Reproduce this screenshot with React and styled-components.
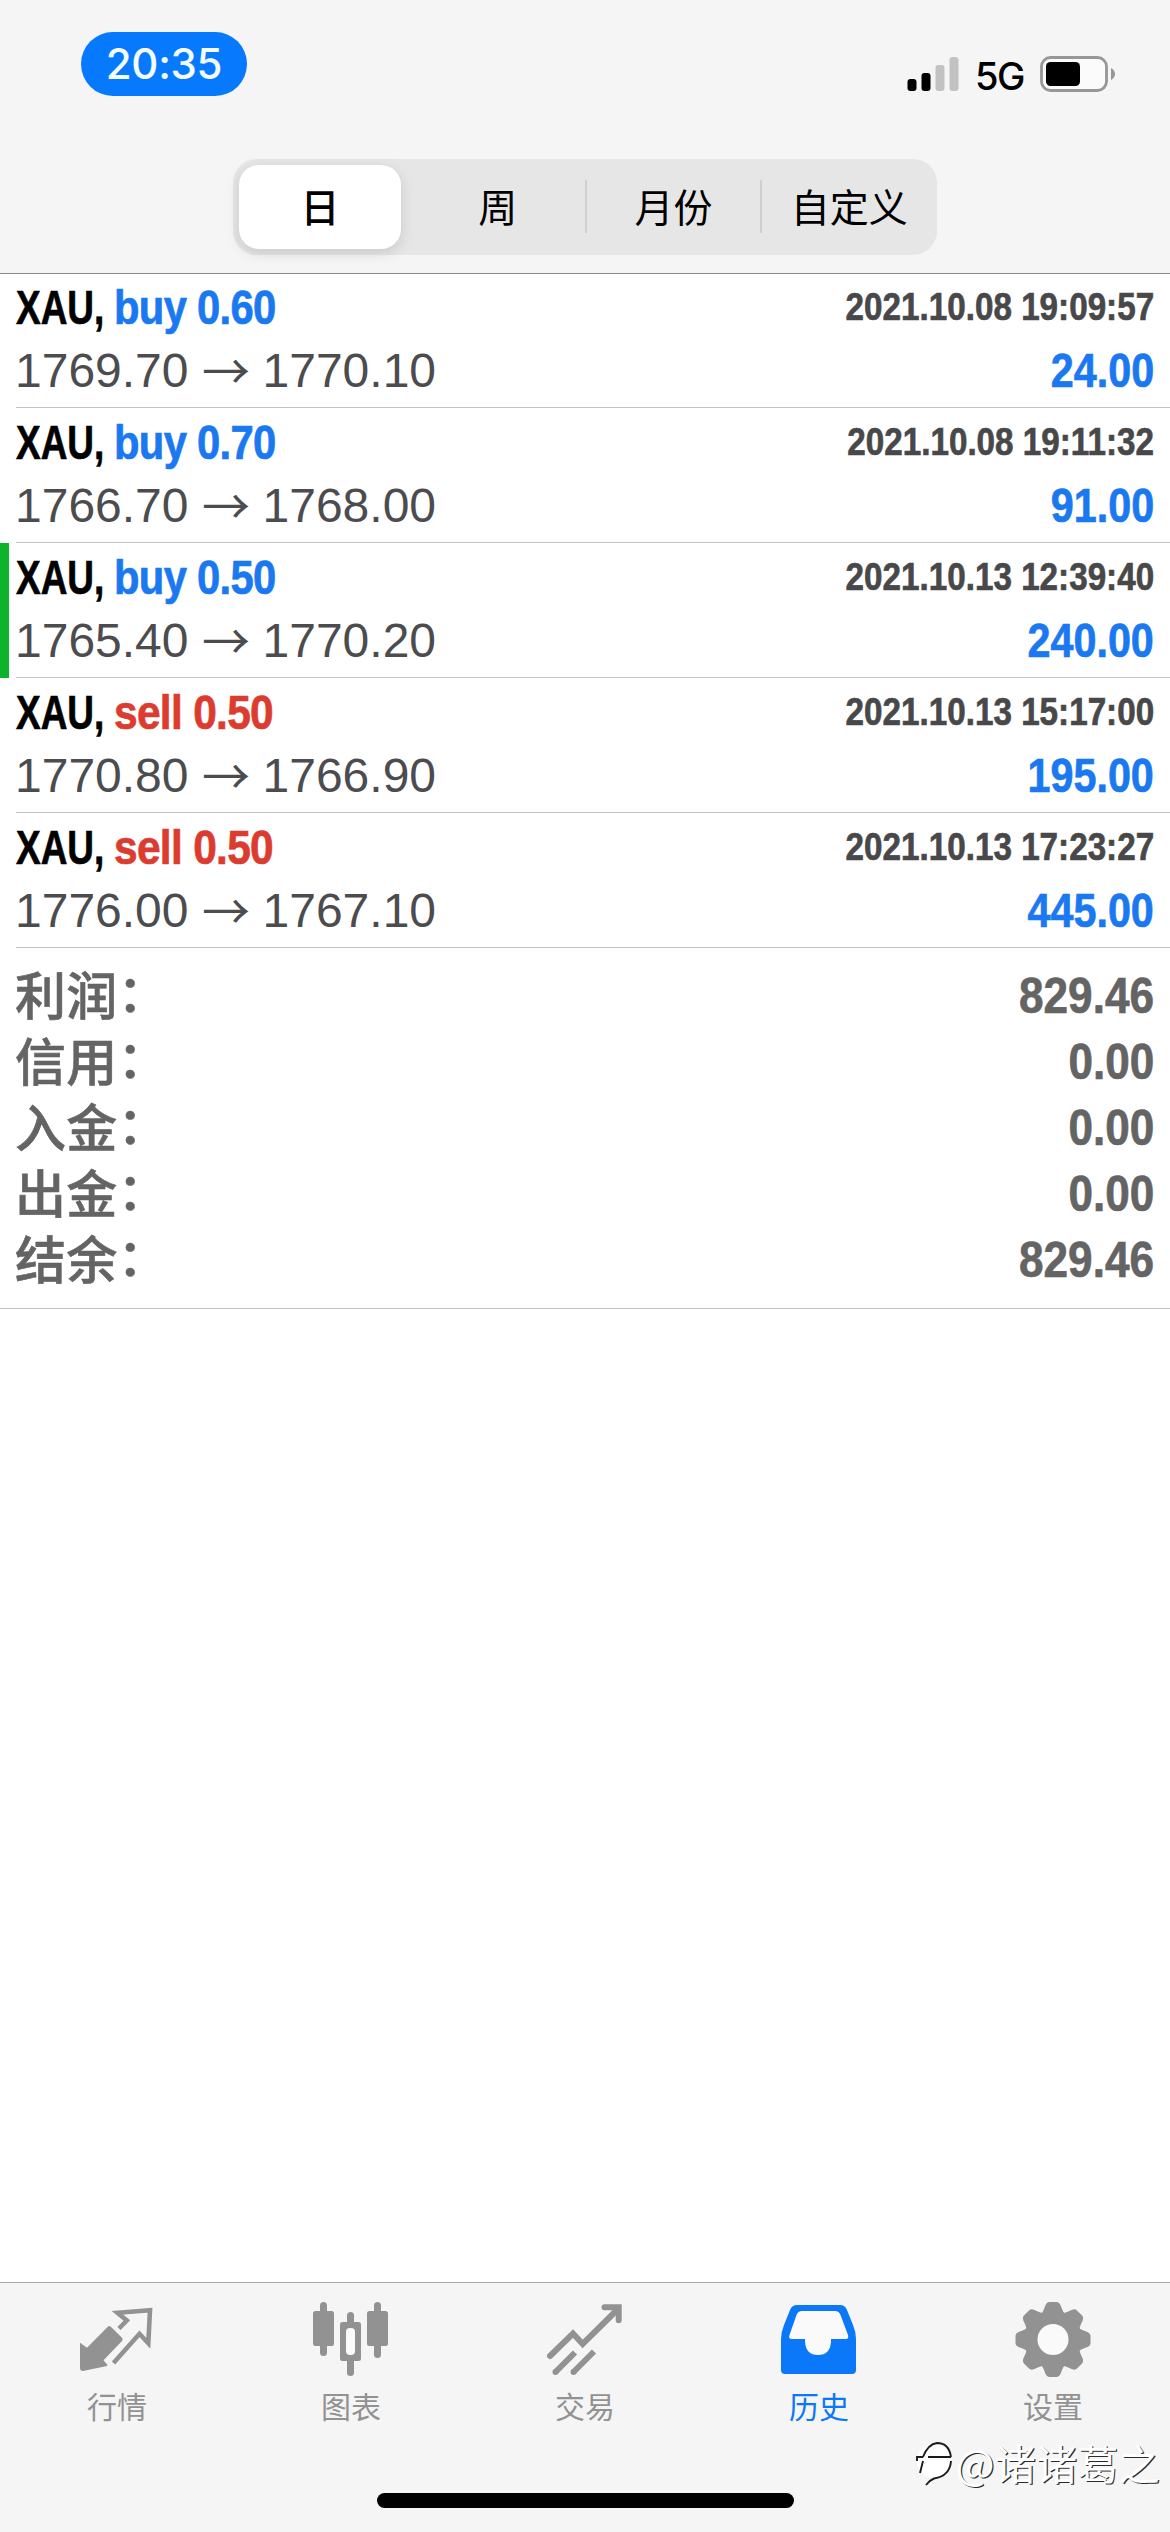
import React, { useState } from "react";
import styled, { createGlobalStyle } from "styled-components";

const GlobalStyle = createGlobalStyle`
  * {
    box-sizing: border-box;
  }
  body {
    margin: 0;
    background: #ffffff;
    font-family: "Liberation Sans", "Noto Sans CJK SC", sans-serif;
  }
`;

const Screen = styled.div`
  width: 1170px;
  height: 2532px;
  display: flex;
  flex-direction: column;
  overflow: hidden;
`;

const Header = styled.header`
  height: 274px;
  flex: none;
  display: flex;
  flex-direction: column;
  align-items: center;
  background: #f5f5f5;
  border-bottom: 1px solid #8c8c8e;
`;

const StatusBar = styled.div`
  width: 100%;
  height: 159px;
  padding: 32px 54px 0 81px;
  display: flex;
  justify-content: space-between;
  align-items: flex-start;
`;

const TimePill = styled.div`
  width: 166px;
  height: 64px;
  border-radius: 32px;
  background: #0779fd;
  color: #f4fcff;
  font-family: Inter, sans-serif;
  font-size: 42px;
  font-weight: 500;
  line-height: 64px;
  text-align: center;
  letter-spacing: -0.3px;
`;

const StatusIcons = styled.div`
  height: 36px;
  margin-top: 24px;
  display: flex;
  align-items: center;
`;

const Network = styled.span`
  width: 64px;
  padding: 4px 0 0 16px;
  font-family: Inter, sans-serif;
  font-size: 38px;
  font-weight: 500;
  line-height: 36px;
  letter-spacing: -1.5px;
  margin-right: 17px;
`;

const Segmented = styled.div`
  width: 704px;
  height: 96px;
  display: flex;
  border-radius: 24px;
  background: #e6e6e7;
`;

const Segment = styled.button`
  width: ${(props) => (props.$active ? "162px" : "auto")};
  flex: ${(props) => (props.$active ? "none" : "1")};
  height: 84px;
  margin: ${(props) => (props.$active ? "6px 9px 6px 6px" : "6px 0")};
  padding: 0 0 4px;
  border: 0;
  border-radius: 20px;
  background: ${(props) => (props.$active ? "#ffffff" : "transparent")};
  box-shadow: ${(props) =>
    props.$active ? "0 4px 14px rgba(0, 0, 0, 0.13)" : "none"};
  color: #000000;
  font-family: "Noto Sans CJK SC", sans-serif;
  font-size: 39px;
  font-weight: ${(props) => (props.$active ? 500 : 400)};
  line-height: 80px;
`;

const Divider = styled.span`
  width: 2px;
  height: 53px;
  margin: 21px -1px 0;
  background: ${(props) => (props.$hidden ? "transparent" : "#cfcfd1")};
`;

const Main = styled.main`
  flex: 1;
`;

const Deal = styled.div`
  height: ${(props) => (props.$first ? "134px" : "135px")};
  padding-left: ${(props) => (props.$marked ? "7px" : "16px")};
  border-left: ${(props) => (props.$marked ? "9px solid #0eb32c" : "0")};
`;

const DealBody = styled.div`
  height: 100%;
  padding: ${(props) => (props.$first ? "2px" : "3px")} 16px 0 0;
  border-bottom: 1px solid #c3c3c6;
`;

const Line = styled.div`
  height: 63px;
  display: flex;
  justify-content: space-between;
`;

const Side = styled.div`
  display: flex;
`;

const Condensed = styled.span`
  display: block;
  width: ${(props) => props.$width || "auto"};
  color: ${(props) => props.color};
  font-size: ${(props) => props.$size || "48px"};
  font-weight: 700;
  line-height: 63px;
  letter-spacing: ${(props) => props.$spacing || "0"};
  white-space: nowrap;
  transform: scaleX(${(props) => props.$scale});
  transform-origin: ${(props) => (props.$end ? "right" : "left")} center;
  -webkit-text-stroke: 0.7px currentColor;
`;

const DateText = styled(Condensed)`
  line-height: 61px;
`;

const Price = styled.span`
  margin-left: -1px;
  color: #4c4c4f;
  font-size: 48px;
  line-height: 63px;
`;

const Arrow = styled.span`
  width: 75px;
  color: #4c4c4f;
  font-family: "Noto Sans CJK SC", sans-serif;
  font-size: 48px;
  line-height: 58px;
  text-align: center;
`;

const Summary = styled.div`
  height: 361px;
  padding: 15px 16px 0;
  border-bottom: 1px solid #c3c3c6;
`;

const Total = styled.div`
  height: 66px;
  display: flex;
  justify-content: space-between;
  align-items: center;
`;

const TotalLabel = styled.span`
  margin: 3px 0 0 -1px;
  color: #646464;
  font-size: 51px;
  font-weight: 500;
  line-height: 66px;
  letter-spacing: 0.2px;
  -webkit-text-stroke: 0.6px currentColor;
`;

/* the traditional face keeps the full-width colon vertically centred */
const Colon = styled.span`
  font-family: "Liberation Sans", "Noto Sans CJK TC", sans-serif;
  font-feature-settings: "halt";
`;

const TabBar = styled.nav`
  position: relative;
  height: 250px;
  flex: none;
  padding-bottom: 24px;
  display: flex;
  flex-direction: column;
  justify-content: space-between;
  align-items: center;
  background: #f5f5f5;
  border-top: 1px solid #a8a8aa;
`;

const Tabs = styled.div`
  width: 100%;
  display: flex;
`;

const Tab = styled.div`
  flex: 1;
  padding-top: 20px;
  display: flex;
  flex-direction: column;
  align-items: center;
  color: ${(props) => (props.$active ? "#0a78f8" : "#929292")};

  svg {
    display: block;
    overflow: visible;
  }
`;

const TabLabel = styled.span`
  margin-top: -2px;
  font-family: "Noto Sans CJK SC", sans-serif;
  font-size: 30px;
  line-height: 40px;
`;

const HomeIndicator = styled.div`
  width: 417px;
  height: 15px;
  border-radius: 8px;
  background: #000000;
`;

const Watermark = styled.div`
  position: absolute;
  right: 10px;
  bottom: 42px;
  display: flex;
  align-items: center;
  color: #ffffff;
  font-family: "Noto Sans CJK SC", sans-serif;
  font-size: 41px;
  line-height: 56px;
  letter-spacing: 0.3px;
  text-shadow: 1.2px 1.2px 0 #2a2a2a;
`;

const BLUE = "#1a78f0";
const RED = "#dc3c30";

const deals = [
  ["buy", "0.60", "2021.10.08 19:09:57", "1769.70", "1770.10", "24.00"],
  ["buy", "0.70", "2021.10.08 19:11:32", "1766.70", "1768.00", "91.00"],
  ["buy", "0.50", "2021.10.13 12:39:40", "1765.40", "1770.20", "240.00"],
  ["sell", "0.50", "2021.10.13 15:17:00", "1770.80", "1766.90", "195.00"],
  ["sell", "0.50", "2021.10.13 17:23:27", "1776.00", "1767.10", "445.00"],
];

const totals = [
  ["利润", "829.46"],
  ["信用", "0.00"],
  ["入金", "0.00"],
  ["出金", "0.00"],
  ["结余", "829.46"],
];

const periods = ["日", "周", "月份", "自定义"];

function SignalIcon() {
  return (
    <svg width="52" height="36" viewBox="0 0 52 36">
      <rect x="0.500" y="23" width="9" height="12" rx="3" fill="#000" />
      <rect x="14.500" y="17" width="9" height="18" rx="3" fill="#000" />
      <rect x="28.500" y="9" width="9" height="26" rx="3" fill="#c2c2c2" />
      <rect x="42.500" y="1" width="9" height="34" rx="3" fill="#c2c2c2" />
    </svg>
  );
}

function BatteryIcon() {
  return (
    <svg width="76" height="36" viewBox="0 0 76 36">
      <rect
        x="1.500"
        y="1.500"
        width="65"
        height="33"
        rx="9"
        fill="#fbfbfb"
        stroke="#979797"
        strokeWidth="2.800"
      />
      <rect x="6" y="6" width="34" height="24" rx="4.500" fill="#000" />
      <path d="M71 12q4 2.500 4 6t-4 6z" fill="#979797" />
    </svg>
  );
}

function QuotesIcon() {
  return (
    <svg width="84" height="84" viewBox="0 0 84 84" fill="none">
      <path
        d="M5 39.700L12 44.800 32.800 23.800q1.500-1.600 3 0L47 34.700q1.500 1.500 0 3.200L28.500 57.300 32.500 62q0 1-1.500 1.300L9 67.800q-4 .6-4-2.800z"
        fill="currentColor"
      />
      <path
        d="M44 25.500l7.800-8L42.500 9.800 75 7.300l-1.700 33-8.800-9.500L38.500 60"
        stroke="currentColor"
        strokeWidth="4.600"
      />
    </svg>
  );
}

function ChartIcon() {
  return (
    <svg width="84" height="84" viewBox="0 0 84 84" fill="currentColor">
      <rect x="11" y="-1" width="7" height="54" rx="3.500" />
      <rect x="4" y="8" width="21" height="35" rx="2.500" />
      <rect x="38" y="9" width="7" height="64" rx="3.500" />
      <rect x="31" y="19" width="21" height="39" rx="2.500" />
      <rect x="37" y="25" width="9" height="27" rx="4" fill="#fafafa" />
      <rect x="65" y="-1" width="7" height="56" rx="3.500" />
      <rect x="58" y="8" width="21" height="35" rx="2.500" />
    </svg>
  );
}

function TradeIcon() {
  return (
    <svg
      width="84"
      height="84"
      viewBox="0 0 84 84"
      fill="none"
      stroke="currentColor"
      strokeWidth="6"
    >
      <path d="M7 53L30 30.500l9.700 10.500L75 6" strokeLinecap="round" />
      <path d="M61.500 4.300h14.200v13" strokeLinecap="round" />
      <path d="M12.500 69L32 49.500M30.500 69L51 48.500" />
      <circle cx="12.500" cy="69" r="3" fill="currentColor" stroke="none" />
      <circle cx="30.500" cy="69" r="3" fill="currentColor" stroke="none" />
    </svg>
  );
}

function HistoryIcon() {
  return (
    <svg width="84" height="84" viewBox="0 0 84 84">
      <path
        d="M20 2h43q5 0 7 5l6 15q3 7 3 14v31q0 4-4 4H8q-4 0-4-4V36q0-7 3-14l6-15q2-5 7-5z"
        fill="currentColor"
      />
      <path
        d="M25 8h33q4 0 5.500 4L71 32q1 4-2 4H54v3q-1 13-13 13T28 39v-3H15q-4 0-2.500-4L19.500 12Q21 8 25 8z"
        fill="#fafafa"
      />
    </svg>
  );
}

function SettingsIcon() {
  const teeth = [0, 45, 90, 135, 180, 225, 270, 315];
  return (
    <svg width="84" height="84" viewBox="0 0 84 84" fill="currentColor">
      {teeth.map((angle) => (
        <path
          key={angle}
          d="M29 12q2-1 4-6l1.500-4Q36-1 38-1h8q2 0 3.500 3L51 6q2 5 4 6z"
          transform={`rotate(${angle} 42 36.500)`}
        />
      ))}
      <circle cx="42" cy="36.500" r="29" />
      <circle cx="42" cy="36.500" r="15.500" fill="#fafafa" />
    </svg>
  );
}

const tabs = [
  ["行情", QuotesIcon],
  ["图表", ChartIcon],
  ["交易", TradeIcon],
  ["历史", HistoryIcon],
  ["设置", SettingsIcon],
];

function WatermarkLogo() {
  return (
    <svg width="42" height="50" viewBox="0 0 42 50" fill="none">
      <circle cx="20" cy="24" r="17" fill="#ffffff" />
      <path
        d="M9 20Q14 7 23 6Q35 6 37 20M3 24v-4h6M14 20h23M9 24L6 36M37 24Q36 39 20 41.500q-4 1.500-8 6.500"
        stroke="#1c1c1c"
        strokeWidth="1.900"
      />
    </svg>
  );
}

function App() {
  const [period, setPeriod] = useState("日");

  return (
    <Screen>
      <GlobalStyle />
      <Header>
        <StatusBar>
          <TimePill>20:35</TimePill>
          <StatusIcons>
            <SignalIcon />
            <Network>5G</Network>
            <BatteryIcon />
          </StatusIcons>
        </StatusBar>
        <Segmented>
          {periods.map((name, i) => (
            <React.Fragment key={name}>
              {i > 0 && <Divider $hidden={i === 1} />}
              <Segment $active={name === period} onClick={() => setPeriod(name)}>
                {name}
              </Segment>
            </React.Fragment>
          ))}
        </Segmented>
      </Header>

      <Main>
        {deals.map(([type, volume, date, open, close, profit], i) => (
          <Deal key={date} $first={i === 0} $marked={i === 2}>
            <DealBody $first={i === 0}>
              <Line>
                <Side>
                  <Condensed color="#000000" $width="98px" $scale={0.77}>
                    XAU,
                  </Condensed>
                  <Condensed
                    color={type === "buy" ? BLUE : RED}
                    $scale={type === "buy" ? 0.87 : 0.885}
                    $spacing="-0.8px"
                  >
                    {type} {volume}
                  </Condensed>
                </Side>
                <DateText color="#48484a" $size="39px" $scale={0.852} $end>
                  {date}
                </DateText>
              </Line>
              <Line>
                <Side>
                  <Price>{open}</Price>
                  <Arrow>→</Arrow>
                  <Price>{close}</Price>
                </Side>
                <Condensed color={BLUE} $scale={0.86} $end>
                  {profit}
                </Condensed>
              </Line>
            </DealBody>
          </Deal>
        ))}
        <Summary>
          {totals.map(([label, value]) => (
            <Total key={label}>
              <TotalLabel>
                {label}
                <Colon>：</Colon>
              </TotalLabel>
              <Condensed color="#646464" $size="50px" $scale={0.882} $end>
                {value}
              </Condensed>
            </Total>
          ))}
        </Summary>
      </Main>

      <TabBar>
        <Tabs>
          {tabs.map(([label, Icon]) => (
            <Tab key={label} $active={label === "历史"}>
              <Icon />
              <TabLabel>{label}</TabLabel>
            </Tab>
          ))}
        </Tabs>
        <HomeIndicator />
        <Watermark>
          <WatermarkLogo />
          @诸诸葛之
        </Watermark>
      </TabBar>
    </Screen>
  );
}

export default App;
